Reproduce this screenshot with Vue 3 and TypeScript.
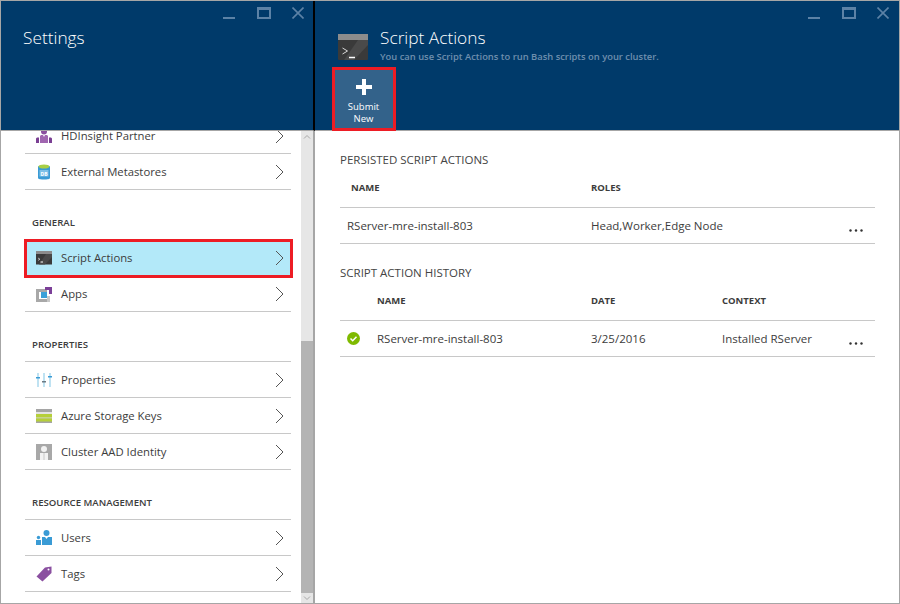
<script setup lang="ts">
interface MenuItem {
  label: string
  icon: string
  active?: boolean
}

interface MenuGroup {
  title?: string
  items: MenuItem[]
}

const groups: MenuGroup[] = [
  {
    items: [
      { label: 'HDInsight Partner', icon: 'partner' },
      { label: 'External Metastores', icon: 'db' },
    ],
  },
  {
    title: 'GENERAL',
    items: [
      { label: 'Script Actions', icon: 'script', active: true },
      { label: 'Apps', icon: 'apps' },
    ],
  },
  {
    title: 'PROPERTIES',
    items: [
      { label: 'Properties', icon: 'props' },
      { label: 'Azure Storage Keys', icon: 'keys' },
      { label: 'Cluster AAD Identity', icon: 'identity' },
    ],
  },
  {
    title: 'RESOURCE MANAGEMENT',
    items: [
      { label: 'Users', icon: 'users' },
      { label: 'Tags', icon: 'tags' },
    ],
  },
]
</script>

<template>
  <div class="portal">
    <section class="blade settings">
      <header class="blade-head">
        <div class="win-controls">
          <span class="ctl-min"></span>
          <span class="ctl-max"></span>
          <svg class="ctl-close" width="12" height="12" viewBox="0 0 12 12">
            <path d="M0.5 0.5L11.5 11.5M11.5 0.5L0.5 11.5" stroke="#5c82a6" stroke-width="1.6" fill="none" />
          </svg>
        </div>
        <h1 class="settings-title">Settings</h1>
      </header>
      <div class="menu-wrap">
        <div class="menu">
          <div v-for="(group, gi) in groups" :key="gi" class="group">
            <div v-if="group.title" class="group-title">{{ group.title }}</div>
            <a
              v-for="item in group.items"
              :key="item.label"
              :class="['menu-row', { active: item.active }]"
            >
              <span class="menu-icon">
                <svg v-if="item.icon === 'partner'" width="16" height="16" viewBox="0 0 16 16">
                  <path d="M5 0h6v3.500a3 3 0 0 1-6 0z" fill="#8a4f9e" />
                  <path d="M5 7h2l1 2 1-2h2l1 1v7H4V8z" fill="#a066b0" />
                  <path d="M0 10.500l1-1h2v5.500H0zM13 9.500h2l1 1V15h-3z" fill="#7a3f93" />
                </svg>
                <svg v-else-if="item.icon === 'db'" width="16" height="16" viewBox="0 0 16 16">
                  <path d="M2 2.500C2 1 14 1 14 2.500V14c0 2-12 2-12 0z" fill="#3a9bd5" />
                  <ellipse cx="8" cy="2.500" rx="5.500" ry="2" fill="#a8cf45" />
                  <rect x="3.500" y="6" width="9" height="6.500" fill="#7cc0e8" />
                  <text x="8" y="11.500" class="db-text" text-anchor="middle">DB</text>
                </svg>
                <svg v-else-if="item.icon === 'script'" width="16" height="14" viewBox="0 0 16 14">
                  <rect y="0" width="16" height="3" fill="#8c8c8c" />
                  <rect y="3" width="16" height="10.500" fill="#3a3a3a" />
                  <path d="M10 3h6v3L9 13.500H3z" fill="#4a4a4a" />
                  <path d="M2 7l2 1.200-2 1.200" stroke="#d8d8d8" stroke-width=".7" fill="none" />
                  <path d="M4.500 11h2.500" stroke="#fff" stroke-width="1" />
                </svg>
                <svg v-else-if="item.icon === 'apps'" width="16" height="16" viewBox="0 0 16 16">
                  <path d="M0 3h11v3H3v7h8v3H0z" fill="#a8a8a8" />
                  <path d="M11 10h3v6h-3z" fill="#c8c8c8" />
                  <rect x="5" y="6" width="6" height="6" fill="#3aa0d8" />
                  <path d="M9 1h7v7h-3V4H9z" fill="#7b3f98" />
                </svg>
                <svg v-else-if="item.icon === 'props'" width="16" height="16" viewBox="0 0 16 16">
                  <rect x="1" y="1" width="2" height="14" fill="#bfe2f2" />
                  <rect x="7" y="1" width="2" height="14" fill="#bfe2f2" />
                  <rect x="13" y="1" width="2" height="14" fill="#bfe2f2" />
                  <rect x="0" y="5" width="4" height="1.500" fill="#3a9bd5" />
                  <rect x="6" y="9" width="4" height="1.500" fill="#6c7a84" />
                  <rect x="12" y="4" width="4" height="1.500" fill="#3a9bd5" />
                </svg>
                <svg v-else-if="item.icon === 'keys'" width="16" height="14" viewBox="0 0 16 14">
                  <rect width="16" height="14" fill="#a5a5a5" />
                  <rect y="3" width="16" height="2" fill="#e4e4e4" />
                  <rect y="5" width="16" height="3.500" fill="#b5cf3a" />
                  <rect y="8.500" width="16" height="1" fill="#e4eeb0" />
                  <rect y="9.500" width="16" height="3" fill="#b5cf3a" />
                </svg>
                <svg v-else-if="item.icon === 'identity'" width="16" height="16" viewBox="0 0 16 16">
                  <rect width="16" height="16" fill="#a8a8a8" />
                  <circle cx="8" cy="5" r="3" fill="#f2f2f2" />
                  <path d="M4 9h8v7H4z" fill="#f2f2f2" />
                  <path d="M7.500 9h1v7h-1z" fill="#c8c8c8" />
                </svg>
                <svg v-else-if="item.icon === 'users'" width="16" height="16" viewBox="0 0 16 16">
                  <circle cx="10.500" cy="3" r="3" fill="#3a9bd5" />
                  <path d="M6 7h3l1.500 2L12 7h4v8H6z" fill="#3a9bd5" />
                  <circle cx="2.500" cy="7.500" r="1.700" fill="#3a9bd5" />
                  <path d="M0 10h5v5H0z" fill="#3a9bd5" />
                </svg>
                <svg v-else width="16" height="16" viewBox="0 0 16 16">
                  <path d="M0.500 10.500L9 1.500 15.500 0.500 15.500 7 6.500 15.500z" fill="#8a4fa0" />
                  <circle cx="12.500" cy="3.500" r="1" fill="#fff" />
                </svg>
              </span>
              <span class="menu-label">{{ item.label }}</span>
              <svg class="chevron" width="9" height="16" viewBox="0 0 9 16">
                <path d="M1 1l7 7-7 7" stroke="#555" stroke-width="1" fill="none" />
              </svg>
            </a>
          </div>
        </div>
        <div class="scrollbar">
          <svg class="arrow-up" width="12" height="8" viewBox="0 0 12 8">
            <path d="M3 5.500l3-3 3 3" stroke="#a8a8a8" fill="none" />
          </svg>
          <div class="thumb"></div>
          <svg class="arrow-down" width="12" height="8" viewBox="0 0 12 8">
            <path d="M3 2.500l3 3 3-3" stroke="#a8a8a8" fill="none" />
          </svg>
        </div>
      </div>
    </section>

    <section class="blade actions">
      <header class="blade-head">
        <div class="win-controls">
          <span class="ctl-min"></span>
          <span class="ctl-max"></span>
          <svg class="ctl-close" width="12" height="12" viewBox="0 0 12 12">
            <path d="M0.500 0.500L11.500 11.500M11.500 0.500L0.500 11.500" stroke="#5c82a6" stroke-width="1.600" fill="none" />
          </svg>
        </div>
        <div class="title-row">
          <svg width="30" height="27" viewBox="0 0 30 27">
            <rect y="0" width="30" height="6" fill="#8c8c8c" />
            <rect y="6" width="30" height="20" rx="1" fill="#3a3a3a" />
            <path d="M20 6h10v5L16 26H6z" fill="#4a4a4a" />
            <path d="M4.500 14l5 3-5 3" stroke="#d8d8d8" stroke-width="1" fill="none" />
            <path d="M11 23.500h6" stroke="#fff" stroke-width="1.500" />
          </svg>
          <div>
            <h2 class="actions-title">Script Actions</h2>
            <p class="actions-sub">You can use Script Actions to run Bash scripts on your cluster.</p>
          </div>
        </div>
        <button class="submit-btn">
          <svg width="16" height="16" viewBox="0 0 16 16">
            <path d="M6 0h4v6h6v4h-6v6H6v-6H0V6h6z" fill="#fff" />
          </svg>
          <span>Submit<br />New</span>
        </button>
      </header>
      <div class="content">
        <h3 class="section-title">PERSISTED SCRIPT ACTIONS</h3>
        <div class="tbl-head persisted">
          <span>NAME</span>
          <span>ROLES</span>
        </div>
        <div class="tbl-row persisted">
          <span>RServer-mre-install-803</span>
          <span>Head,Worker,Edge Node</span>
          <svg class="dots" width="14" height="3" viewBox="0 0 14 3">
            <circle cx="1.500" cy="1.500" r="1.200" fill="#333" />
            <circle cx="7" cy="1.500" r="1.200" fill="#333" />
            <circle cx="12.500" cy="1.500" r="1.200" fill="#333" />
          </svg>
        </div>

        <h3 class="section-title history-title">SCRIPT ACTION HISTORY</h3>
        <div class="tbl-head history">
          <span></span>
          <span>NAME</span>
          <span>DATE</span>
          <span>CONTEXT</span>
        </div>
        <div class="tbl-row history">
          <svg class="status" width="13" height="13" viewBox="0 0 13 13">
            <circle cx="6.500" cy="6.500" r="6.500" fill="#7fba00" />
            <path d="M3.500 6.500l2.200 2.200 3.800-4" stroke="#fff" stroke-width="1.500" fill="none" />
          </svg>
          <span>RServer-mre-install-803</span>
          <span>3/25/2016</span>
          <span>Installed RServer</span>
          <svg class="dots" width="14" height="3" viewBox="0 0 14 3">
            <circle cx="1.500" cy="1.500" r="1.200" fill="#333" />
            <circle cx="7" cy="1.500" r="1.200" fill="#333" />
            <circle cx="12.500" cy="1.500" r="1.200" fill="#333" />
          </svg>
        </div>
      </div>
    </section>
  </div>
</template>

<style scoped>
.portal {
  display: flex;
  width: 900px;
  height: 604px;
  box-sizing: border-box;
  border: 1px solid #a6a6a6;
  background: #fff;
  font-family: 'Open Sans', 'Noto Sans', sans-serif;
  font-size: 11.5px;
  color: #3c3c3c;
  overflow: hidden;
}

.blade {
  display: flex;
  flex-direction: column;
  min-height: 0;
}

.settings {
  width: 314px;
  flex: none;
}

.actions {
  flex: 1;
}

.blade-head {
  position: relative;
  height: 130px;
  flex: none;
  box-sizing: border-box;
  background: #003a6a;
  border-bottom: 1px solid #a6a6a6;
}

.settings .blade-head {
  border-right: 2px solid #000;
}

.win-controls {
  position: absolute;
  top: 6px;
  right: 10px;
  display: flex;
  align-items: flex-end;
  gap: 21px;
  height: 12px;
}

.settings .win-controls {
  right: 9px;
}

.ctl-min {
  width: 12px;
  height: 2px;
  margin-right: 1px;
  background: #5c82a6;
}

.ctl-max {
  width: 14px;
  height: 12px;
  box-sizing: border-box;
  border: 2px solid #5c82a6;
  border-top-width: 3px;
}

.settings-title,
.actions-title {
  margin: 0;
  font-weight: 300;
  font-size: 17.300px;
  line-height: 24px;
  color: #fff;
}

.settings-title {
  padding: 25px 0 0 22px;
}

.title-row {
  display: flex;
  gap: 12px;
  padding: 25px 0 0 23px;
}

.title-row svg {
  margin-top: 8px;
}

.actions-sub {
  margin: 0;
  font-size: 9.400px;
  line-height: 13px;
  font-weight: 600;
  color: #6f8fae;
  white-space: nowrap;
}

.submit-btn {
  position: absolute;
  left: 17px;
  top: 66px;
  width: 64px;
  height: 64px;
  box-sizing: border-box;
  padding: 9px 1px 0 0;
  border: 3px solid #ed1c24;
  background: #33628a;
  color: #fff;
  font-family: inherit;
  font-size: 9.500px;
  line-height: 12px;
  display: flex;
  flex-direction: column;
  align-items: center;
  gap: 6px;
  z-index: 1;
}

.menu-wrap {
  position: relative;
  flex: 1;
  min-height: 0;
  overflow: hidden;
  border-right: 2px solid #a6a6a6;
}

.menu {
  margin-top: -13px;
  padding: 0 22px 0 24px;
  font-size: 11.300px;
}

.group-title {
  height: 28px;
  margin-top: 21px;
  font-size: 9.600px;
  line-height: 24px;
  font-weight: 600;
  padding-left: 7px;
}

.menu-row {
  display: flex;
  align-items: center;
  height: 36px;
  box-sizing: border-box;
  border-bottom: 1px solid #c8c8c8;
  padding: 0 7px 0 11px;
  color: #3c3c3c;
}

.group-title + .menu-row {
  border-top: 1px solid #c8c8c8;
  height: 37px;
}

.menu-row.active {
  position: relative;
  background: #b3e9f9;
  border-color: #b3e9f9;
}

.menu-row.active::after {
  content: '';
  position: absolute;
  top: -1px;
  left: -1px;
  right: -2px;
  bottom: -3px;
  border: 3px solid #ed1c24;
  z-index: 1;
}

.menu-icon {
  width: 16px;
  height: 16px;
  display: flex;
  align-items: center;
  margin-right: 9px;
  flex: none;
}

.menu-label {
  flex: 1;
  white-space: nowrap;
}

.db-text {
  font-size: 5px;
  font-weight: 700;
  fill: #fff;
}

.chevron {
  flex: none;
}

.scrollbar {
  position: absolute;
  top: 0;
  right: 0;
  bottom: 0;
  width: 12px;
  background: #e6e6e6;
}

.arrow-up {
  position: absolute;
  top: 2px;
  left: 0;
}

.arrow-down {
  position: absolute;
  bottom: 1px;
  left: 0;
}

.thumb {
  position: absolute;
  top: 210px;
  bottom: 10px;
  left: 0;
  right: 0;
  background: #b4b4b4;
}

.content {
  padding: 21px 24px 0 25px;
}

.section-title {
  margin: 0;
  font-weight: 400;
  font-size: 11.500px;
  line-height: 16px;
  color: #444;
}

.history-title {
  margin-top: 21px;
}

.tbl-head,
.tbl-row {
  display: grid;
  align-items: center;
  box-sizing: border-box;
  border-bottom: 1px solid #c8c8c8;
}

.tbl-head {
  height: 40px;
  font-size: 9.500px;
  font-weight: 700;
}

.tbl-row {
  height: 36px;
}

.tbl-head.persisted {
  grid-template-columns: 240px 1fr;
  padding-left: 11px;
}

.tbl-row.persisted {
  grid-template-columns: 244px 1fr 30px;
  padding-left: 7px;
}

.tbl-head.history {
  grid-template-columns: 37px 214px 131px 1fr;
}

.tbl-row.history {
  grid-template-columns: 37px 214px 131px 1fr 30px;
}

.status {
  margin-left: 7px;
}

.dots {
  margin: 10px 0 0 4px;
}
</style>
